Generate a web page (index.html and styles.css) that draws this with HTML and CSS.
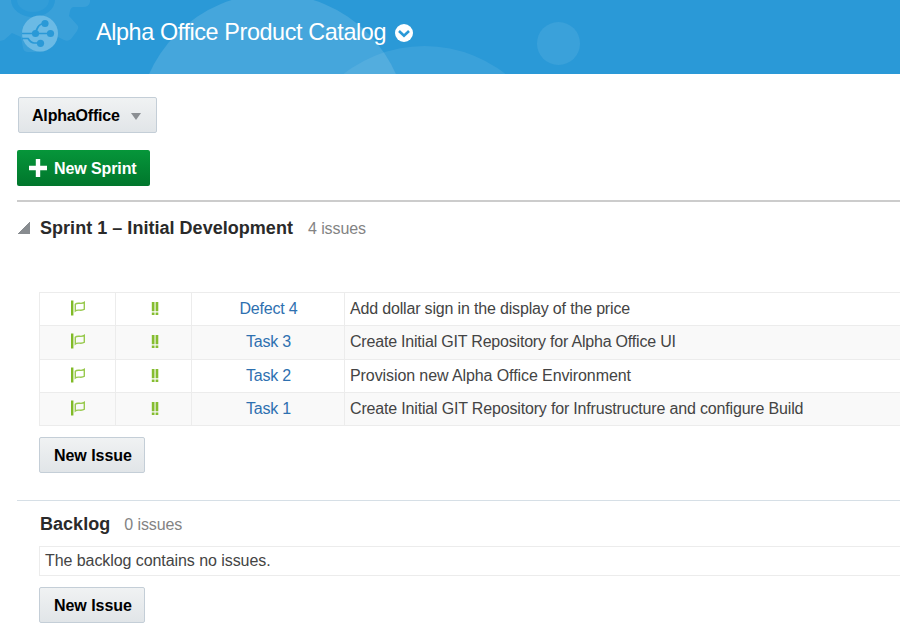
FILE: index.html
```html
<!DOCTYPE html>
<html lang="en">
<head>
<meta charset="utf-8">
<title>Alpha Office Product Catalog</title>
<link rel="stylesheet" href="styles.css">
</head>
<body>
<svg class="sprites" aria-hidden="true">
  <symbol id="flag" viewBox="0 0 16 16">
    <path d="M2.2 .5V15.5" stroke="#80ba27" stroke-width="2.4" fill="none"/>
    <path d="M5.3 4.3C8 1.5 11 5 14.3 2.4V9.3C11 11.8 8 8.6 5.3 11Z" fill="none" stroke="#98c94e" stroke-width="1.4"/>
  </symbol>
  <symbol id="priority" viewBox="0 0 8 14">
    <path d="M.8 0H3.5V9.2H.8ZM4.6 0H7.3V9.2H4.6ZM.8 10.5H3.5V13H.8ZM4.6 10.5H7.3V13H4.6Z" fill="#85bd30"/>
  </symbol>
</svg>
<header class="banner">
  <svg class="banner-art" viewBox="0 0 900 74" aria-hidden="true">
    <path fill="#fff" fill-opacity=".07" fill-rule="evenodd" d="M0 0H90V2Q89 7 83 7H74Q71 7 70 11L69 16L78 26Q79 28 77 31L71 39Q68 42 64 40L54 35Q50 37 46 39V50Q45 52 42 52H28Q24 52 23 48L21 37L12 33L4 40L0 41ZM11 0A22 17 0 0 0 55 0Z"/>
    <path fill="#fff" fill-opacity=".04" d="M17 0A16 12 0 0 0 49 0Z"/>
    <circle cx="272.5" cy="128.7" r="135" fill="#fff" fill-opacity=".13"/>
    <circle cx="424.5" cy="177" r="131" fill="#fff" fill-opacity=".08"/>
    <circle cx="558.5" cy="43.5" r="21.5" fill="#fff" fill-opacity=".08"/>
  </svg>
  <svg class="logo" viewBox="0 0 36 38" aria-hidden="true">
    <circle cx="18" cy="18.5" r="18" fill="#6bbae5"/>
    <g fill="none" stroke="#2a99d7" stroke-width="1.7">
      <path d="M0 18.5H28M0 23.5H6Q9 28 12 28H18M13 18L16 12Q18 8.5 23 8.5"/>
    </g>
    <g fill="#2a99d7"><circle cx="23" cy="8.5" r="3.6"/><circle cx="13.5" cy="18.5" r="3.6"/><circle cx="28.5" cy="18.5" r="3.6"/><circle cx="18.5" cy="28.3" r="3.6"/></g>
  </svg>
  <h1>Alpha Office Product Catalog</h1>
  <svg class="menu" viewBox="0 0 18 18" aria-hidden="true"><circle cx="9" cy="9" r="9" fill="#fff"/><path d="M4 7L9 11.7L14 7" fill="none" stroke="#2a99d7" stroke-width="2.6"/></svg>
</header>
<main>
  <div><button class="btn picker"><span>AlphaOffice</span><span class="caret"></span></button></div>
  <div><button class="btn primary"><svg class="plus" viewBox="0 0 18 18"><path d="M9 0V18M0 9H18" stroke="#fff" stroke-width="4.4"/></svg><span>New Sprint</span></button></div>
  <section class="sprint">
    <div class="heading"><span class="disclosure"></span><h2 class="sprint-name">Sprint 1 – Initial Development</h2><span class="count">4 issues</span></div>
    <table>
      <tr><td><svg class="flag"><use href="#flag"/></svg></td><td><svg class="priority"><use href="#priority"/></svg></td><td><a>Defect 4</a></td><td>Add dollar sign in the display of the price</td></tr>
      <tr><td><svg class="flag"><use href="#flag"/></svg></td><td><svg class="priority"><use href="#priority"/></svg></td><td><a>Task 3</a></td><td class="tight">Create Initial GIT Repository for Alpha Office UI</td></tr>
      <tr><td><svg class="flag"><use href="#flag"/></svg></td><td><svg class="priority"><use href="#priority"/></svg></td><td><a>Task 2</a></td><td class="loose">Provision new Alpha Office Environment</td></tr>
      <tr><td><svg class="flag"><use href="#flag"/></svg></td><td><svg class="priority"><use href="#priority"/></svg></td><td><a>Task 1</a></td><td>Create Initial GIT Repository for Infrustructure and configure Build</td></tr>
    </table>
    <button class="btn issue"><span>New Issue</span></button>
  </section>
  <section class="backlog">
    <div class="heading"><h2>Backlog</h2><span class="count">0 issues</span></div>
    <p class="empty">The backlog contains no issues.</p>
    <button class="btn issue"><span>New Issue</span></button>
  </section>
</main>
</body>
</html>
```

FILE: styles.css
```css
* { box-sizing: border-box; }
body { margin: 0; background: #fff; color: #444; font: 16px/20px "Liberation Sans", Arial, sans-serif; overflow: hidden; }
.sprites { position: absolute; width: 0; height: 0; }
.banner { position: relative; display: flex; height: 74px; padding-left: 22px; background: #2a99d7; color: #fff; }
.banner-art { position: absolute; left: 0; top: 0; width: 900px; height: 74px; }
.logo { position: relative; width: 36px; height: 38px; margin-top: 15px; }
.banner h1 { position: relative; margin: 18px 0 0 38px; width: 290px; font-size: 23.4px; line-height: 28px; font-weight: 400; letter-spacing: -.4px; white-space: nowrap; }
.menu { position: relative; width: 18px; height: 18px; margin: 24px 0 0 9px; }
main { padding: 23px 0 0 17px; }
.btn { display: flex; align-items: center; height: 36px; padding: 2px 14px 0; border: 1px solid #c4ced7; border-radius: 2px; background: linear-gradient(#f0f2f3, #e1e5e8); color: #000; font: bold 16px/20px "Liberation Sans", Arial, sans-serif; white-space: nowrap; }
.picker { width: 139px; margin-left: 1px; padding: 2px 13px 0; letter-spacing: -.18px; }
.caret { margin: 0 0 0 11px; border: 5px solid transparent; border-top: 7px solid #8b8f93; border-bottom: 0; }
.primary { width: 133px; margin-top: 17px; padding: 2px 12px 0; border: 0; background: linear-gradient(#06963a, #00762c); color: #fff; letter-spacing: -.1px; }
.plus { width: 18px; height: 18px; margin: -2px 7px 0 0; flex: none; }
.sprint { margin-top: 14px; border-top: 2px solid #ccc; height: 300px; }
.heading { display: flex; align-items: baseline; }
.sprint .heading { padding-top: 15px; }
.disclosure { width: 13px; height: 12px; margin-right: 10px; background: linear-gradient(to bottom right, transparent 50%, #888c90 50%); }
h2 { margin: 0; color: #2a2a2a; font-size: 18px; line-height: 22px; letter-spacing: .03px; }
.count { margin-left: 15px; color: #838383; letter-spacing: -.08px; }
table { width: 863px; margin: 53px 0 0 22px; border-collapse: collapse; table-layout: fixed; }
td { height: 33px; padding: 0; border: 1px solid #ececec; text-align: center; white-space: nowrap; letter-spacing: -.17px; }
tr:nth-child(2) td { height: 34px; padding-bottom: 1px; }
tr:nth-child(even) { background: #f9f9f9; }
td:nth-child(1), td:nth-child(2) { width: 76px; }
td:nth-child(3) { width: 153px; padding-left: 1px; }
td:nth-child(4) { padding-left: 5px; text-align: left; }
td.tight { letter-spacing: -.2px; }
td.loose { letter-spacing: -.09px; }
td a { color: #2e70b0; }
td svg { display: block; margin: 0 auto; }
td .flag { width: 16px; height: 16px; margin-bottom: 2px; }
td .priority { width: 8px; height: 14px; margin-left: 35px; margin-bottom: 1px; }
.issue { width: 106px; margin: 11px 0 0 22px; letter-spacing: -.05px; }
.backlog { border-top: 1px solid #d6dfe6; padding-top: 12px; }
.backlog .heading { padding-left: 23px; }
.backlog .count { margin-left: 14px; }
.empty { height: 30px; margin: 11px 0 0 22px; padding: 4px 5px; border: 1px solid #ececec; border-right: 0; letter-spacing: -.07px; }
```
